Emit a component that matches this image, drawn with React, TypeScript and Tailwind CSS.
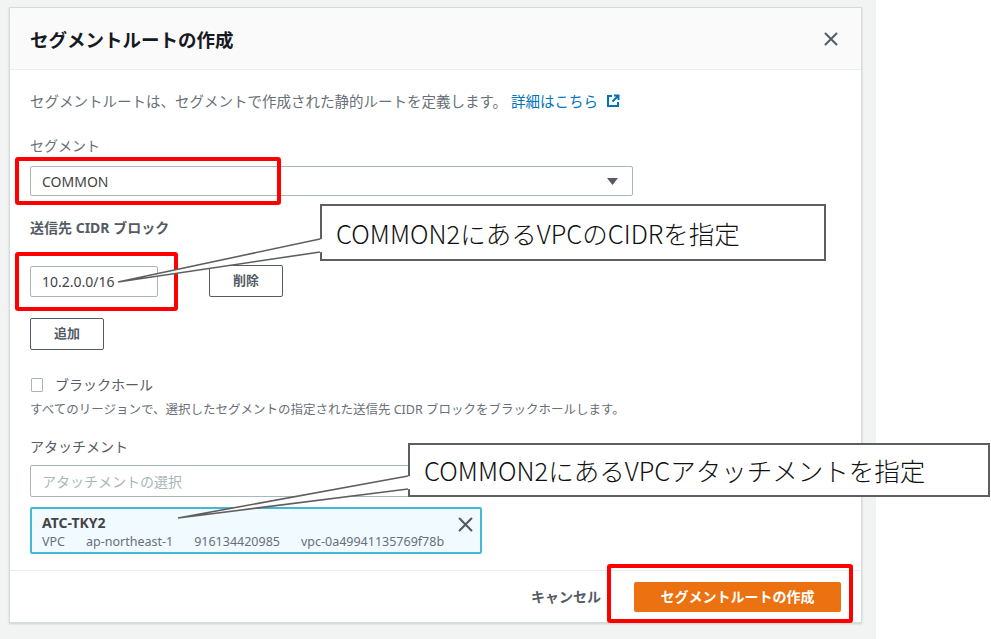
import React from 'react';

const uiFont = { fontFamily: '"Noto Sans", "Noto Sans CJK JP", sans-serif' };
const noteFont = { fontFamily: '"Noto Sans CJK JP", sans-serif' };

function CloseIcon({ size = 14 }: { size?: number }) {
  return (
    <svg width={size} height={size} viewBox="0 0 14 14" fill="none" stroke="#545b64" strokeWidth="2" strokeLinecap="round">
      <path d="M1.5 1.5l11 11M12.5 1.5l-11 11" />
    </svg>
  );
}

function ExternalIcon() {
  return (
    <svg width="14" height="14" viewBox="0 0 14 14" fill="none" stroke="#0073bb" strokeWidth="2">
      <path d="M6 2H2v10h10V8" />
      <path d="M8 1.5h4.5V6M12.5 1.5 6.5 7.5" />
    </svg>
  );
}

function Callout({
  left,
  top,
  width,
  height,
  text,
  tip,
  attach,
}: {
  left: number;
  top: number;
  width: number;
  height: number;
  text: string;
  tip: [number, number];
  attach: [number, number];
}) {
  const [tx, ty] = tip;
  const [a1, a2] = attach;
  return (
    <>
      <div
        className="absolute flex items-center border-2 border-[#5f5f5f] bg-white pl-[14px] text-[25.5px] font-light leading-none text-[#111]"
        style={{ left, top, width, height, ...noteFont }}
      >
        {text}
      </div>
      <svg className="pointer-events-none absolute left-0 top-0" width="991" height="639">
        <polygon points={`${left + 2},${a1} ${tx},${ty} ${left + 2},${a2}`} fill="white" />
        <path d={`M${left},${a1} L${tx},${ty} L${left},${a2}`} fill="none" stroke="#5f5f5f" strokeWidth="1.6" />
      </svg>
    </>
  );
}

function RedBox({ left, top, width, height }: { left: number; top: number; width: number; height: number }) {
  return <div className="absolute rounded-[3px] border-[4px] border-[#ff0000]" style={{ left, top, width, height }} />;
}

export default function App() {
  return (
    <div className="relative flex h-[639px] w-[991px] overflow-hidden bg-white" style={uiFont}>
      <div className="w-[876px] bg-[#f2f3f3] pl-[9px] pt-[7px]">
        <div className="flex h-[616px] w-[853px] flex-col border border-[#d5dbdb] bg-white shadow-[0_1px_2px_rgba(0,0,0,0.15)]">
          {/* header */}
          <div className="flex h-[62px] items-center justify-between border-b border-[#eaeded] bg-[#fafafa] pl-[20px] pr-[23px]">
            <h2 className="pt-[3px] text-[18.5px] font-bold text-[#16191f]">セグメントルートの作成</h2>
            <CloseIcon />
          </div>

          {/* body */}
          <div className="flex-1 px-[20px]">
            <p className="mt-[21px] flex items-center text-[14.5px] leading-[20px] text-[#687078]">
              セグメントルートは、セグメントで作成された静的ルートを定義します。
              <span className="ml-[4px] text-[#0073bb]">詳細はこちら</span>
              <span className="ml-[8px]">
                <ExternalIcon />
              </span>
            </p>

            <div className="mt-[25px] text-[14px] leading-[20px] text-[#687078]">セグメント</div>
            <div className="mt-[10px] flex h-[30px] w-[603px] items-center justify-between rounded-[2px] border border-[#aab7b8] pl-[11px] pr-[14px] text-[14px] text-[#444]">
              <span>COMMON</span>
              <svg width="11" height="7" viewBox="0 0 11 7">
                <path d="M0 0h11L5.5 7z" fill="#545b64" />
              </svg>
            </div>

            <div className="mt-[22px] text-[14px] font-bold leading-[20px] text-[#545b64]">送信先 CIDR ブロック</div>
            <div className="mt-[27px] flex items-center gap-[51px]">
              <div className="flex h-[31px] w-[128px] items-center rounded-[2px] border border-[#aab7b8] pl-[11px] text-[14px] text-[#444]">
                10.2.0.0/16
              </div>
              <button className="h-[32px] w-[74px] rounded-[2px] border-[1.5px] border-[#545b64] text-[13px] font-bold text-[#545b64]">
                削除
              </button>
            </div>
            <button className="mt-[21px] h-[32px] w-[74px] rounded-[2px] border-[1.5px] border-[#545b64] text-[13px] font-bold text-[#545b64]">
              追加
            </button>

            <label className="mt-[25px] flex items-center gap-[12px] text-[14px] leading-[20px] text-[#545b64]">
              <span className="ml-[1px] h-[14px] w-[12px] rounded-[1px] border border-[#aab7b8] bg-white" />
              ブラックホール
            </label>
            <p className="mt-[6px] text-[12.5px] leading-[18px] text-[#687078]">
              すべてのリージョンで、選択したセグメントの指定された送信先 CIDR ブロックをブラックホールします。
            </p>

            <div className="mt-[18px] text-[14px] leading-[20px] text-[#545b64]">アタッチメント</div>
            <div className="mt-[8px] flex h-[32px] w-[603px] items-center rounded-[2px] border border-[#aab7b8] pl-[11px] text-[14px] text-[#aab7b8]">
              アタッチメントの選択
            </div>

            <div className="mt-[10px] flex h-[47px] w-[452px] items-start justify-between rounded-[2px] border-2 border-[#44b9d6] bg-[#f1faff] pl-[10px] pr-[7px] pt-[5px]">
              <div>
                <div className="text-[14px] font-bold leading-[18px] text-[#444]">ATC-TKY2</div>
                <div className="mt-[1px] flex gap-[21px] text-[12.5px] leading-[18px] text-[#687078]">
                  <span>VPC</span>
                  <span>ap-northeast-1</span>
                  <span>916134420985</span>
                  <span>vpc-0a49941135769f78b</span>
                </div>
              </div>
              <div className="pt-[3px]">
                <CloseIcon size={15} />
              </div>
            </div>
          </div>

          {/* footer */}
          <div className="flex h-[52px] items-center justify-end border-t border-[#eaeded] pr-[20px]">
            <button className="mr-[33px] text-[14px] font-bold text-[#545b64]">キャンセル</button>
            <button className="h-[30px] w-[207px] rounded-[2px] bg-[#ec7211] text-[14px] font-bold text-white">
              セグメントルートの作成
            </button>
          </div>
        </div>
      </div>
      <div className="flex-1 bg-white" />

      {/* annotations */}
      <RedBox left={15} top={157} width={266} height={48} />
      <RedBox left={15} top={252} width={163} height={59} />
      <RedBox left={607} top={564} width={246} height={59} />

      <Callout
        left={320}
        top={204}
        width={506}
        height={57}
        text="COMMON2にあるVPCのCIDRを指定"
        tip={[118, 282]}
        attach={[239, 252]}
      />
      <Callout
        left={408}
        top={443}
        width={582}
        height={54}
        text="COMMON2にあるVPCアタッチメントを指定"
        tip={[178, 518]}
        attach={[476, 489]}
      />
    </div>
  );
}
